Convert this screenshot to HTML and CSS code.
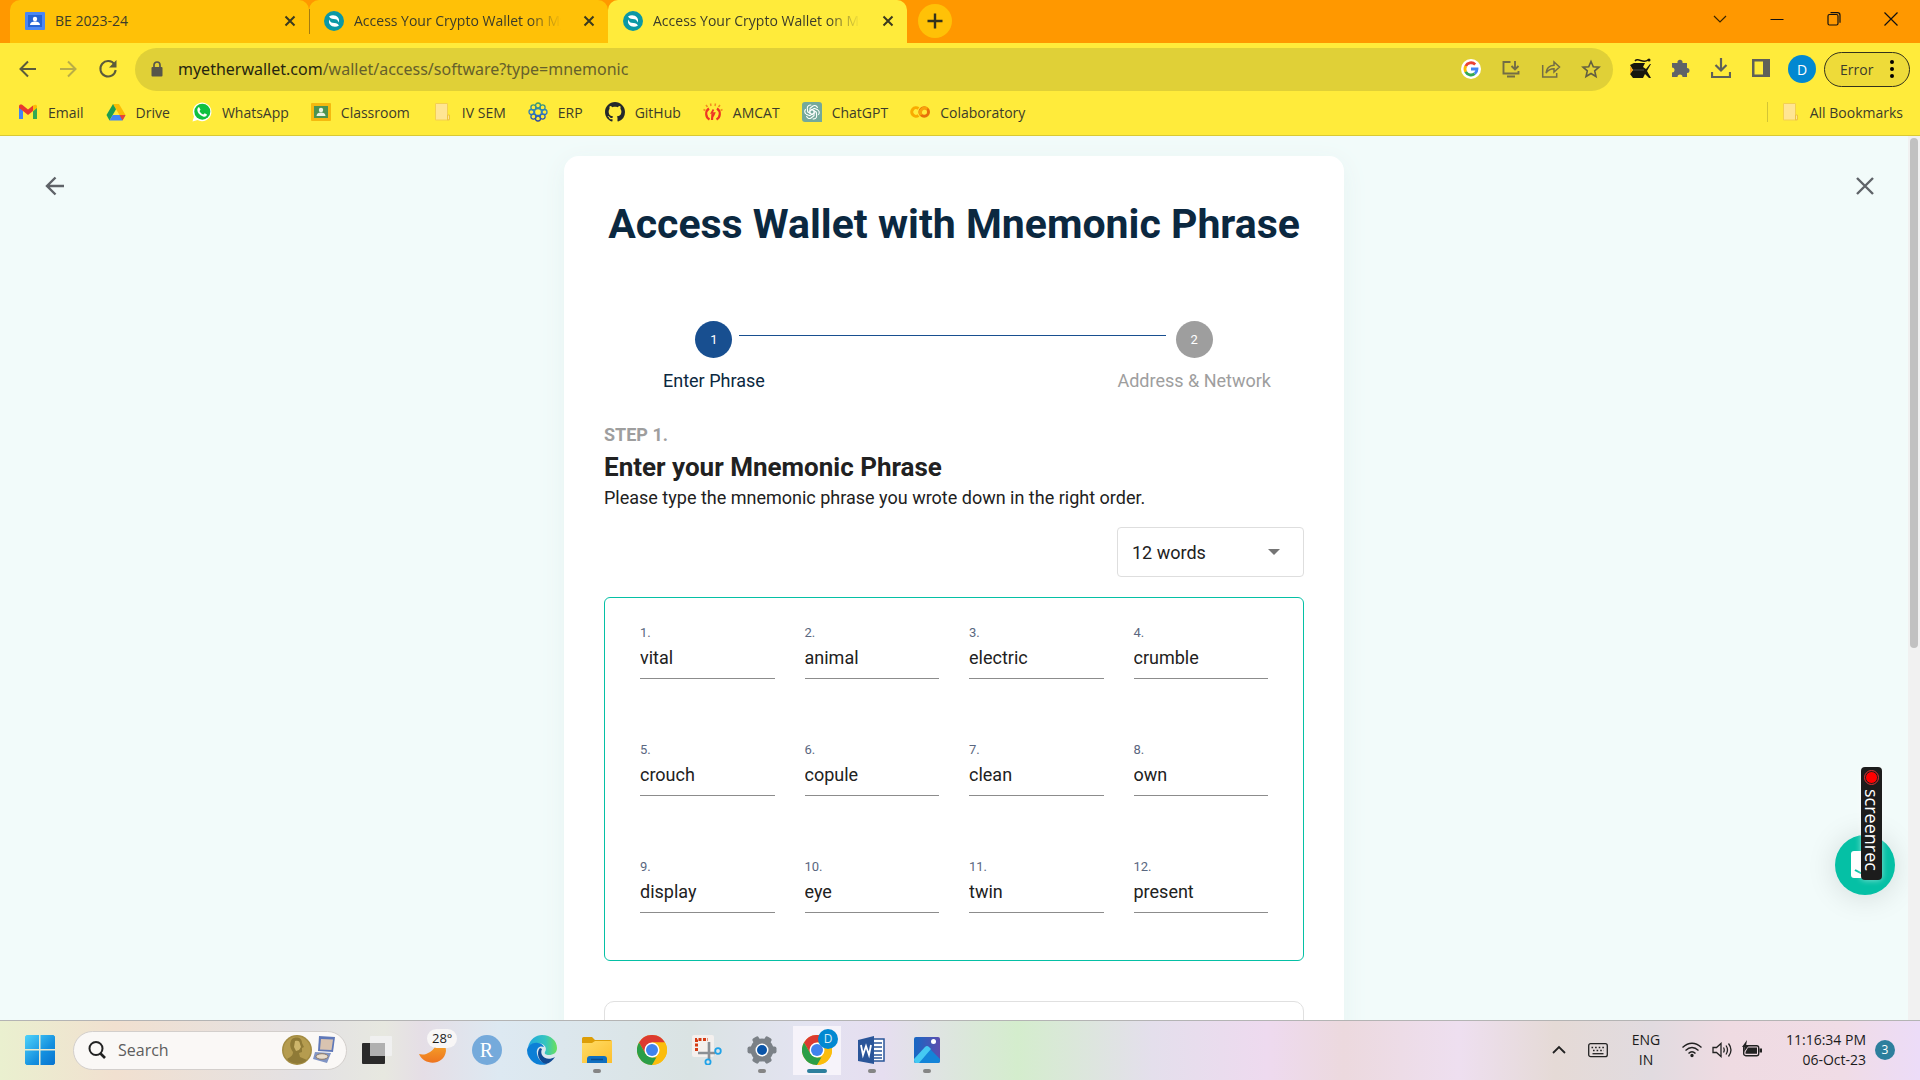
FILE: index.html
```html
<!DOCTYPE html>
<html lang="en">
<head>
<meta charset="utf-8">
<title>Access Your Crypto Wallet on MyEtherWallet</title>
<link rel="stylesheet" href="styles.css">
</head>
<body>
<svg class="defs" aria-hidden="true">
  <defs>
    <linearGradient id="win" x1="0" y1="0" x2="1" y2="1"><stop offset="0" stop-color="#4fd3fa"/><stop offset=".6" stop-color="#1490df"/><stop offset="1" stop-color="#0873cf"/></linearGradient>
    <linearGradient id="moon" x1="0" y1="0" x2="0" y2="1"><stop offset="0" stop-color="#f7b32b"/><stop offset="1" stop-color="#ee7420"/></linearGradient>
    <linearGradient id="edgeA" x1="0" y1="0" x2="1" y2="0"><stop offset="0" stop-color="#1fa7e0"/><stop offset=".6" stop-color="#35c5c0"/><stop offset="1" stop-color="#6be05a"/></linearGradient>
    <linearGradient id="folder" x1="0" y1="0" x2="1" y2="1"><stop offset="0" stop-color="#ffdc66"/><stop offset="1" stop-color="#fdbf2d"/></linearGradient>
    <linearGradient id="photo" x1="0" y1="0" x2="1" y2="0"><stop offset="0" stop-color="#1668c4"/><stop offset="1" stop-color="#5d4dae"/></linearGradient>
    <linearGradient id="erp" gradientUnits="userSpaceOnUse" x1="0" y1="0" x2="0" y2="20"><stop offset="0" stop-color="#3d9c62"/><stop offset=".5" stop-color="#2f7fc4"/><stop offset="1" stop-color="#2b3fa0"/></linearGradient>
    <symbol id="mew" viewBox="0 0 20 20"><circle cx="10" cy="10" r="10" fill="#0b98a5"/><path d="M5 5.500C8 3.500 12 4 14 6.500c1.300 1.700 1.300 3.500.5 5-.3-2-1.500-3-3-3.200C9 8 6.500 8 5 5.500zM15 14.500c-3 2-7 1.500-9-1-1.300-1.700-1.300-3.500-.5-5 .3 2 1.500 3 3 3.200 2.500.3 5 .3 6.500 2.800z" fill="#fff"/></symbol>
    <symbol id="x" viewBox="0 0 12 12"><path d="M1.500 1.500l9 9M10.500 1.500l-9 9" stroke="#3b3a1f" stroke-width="2"/></symbol>
    <symbol id="note" viewBox="0 0 20 20"><path d="M3.500 1.500h12v12h2v4.500h-14z" fill="#ffe594" stroke="#f3d050"/><path d="M15.500 18v-5h2v4.500z" fill="#ffe594" stroke="#efc43c"/></symbol>
    <symbol id="chrome" viewBox="0 0 30 30"><circle cx="15" cy="15" r="15" fill="#fbbd0d"/><path d="M2 7.500A15 15 0 0 1 28 7.500H15L8.500 18.700z" fill="#dc3a30"/><path d="M2 7.500l6.500 11.200L15 22.500h6.500L15 30A15 15 0 0 1 2 7.500z" fill="#2b9e48"/><path d="M21.500 18.700L15 30A15 15 0 0 0 28 7.500H15z" fill="#fbbd0d"/><circle cx="15" cy="15" r="7.500" fill="#fff"/><circle cx="15" cy="15" r="6" fill="#3f83ed"/></symbol>
  </defs>
</svg>

<div class="browser">
  <header class="chrome">
    <div class="tabstrip">
      <div class="tab">
        <svg class="i20" viewBox="0 0 20 20"><rect y="1" width="20" height="18" rx="1" fill="#4a87f3"/><rect x="3" y="4" width="14" height="12" fill="#2664d4"/><circle cx="10" cy="8" r="2.200" fill="#fff"/><path d="M5 14c0-2.500 2.500-3.500 5-3.500s5 1 5 3.500z" fill="#fff"/></svg>
        <span class="tab-title">BE 2023-24</span>
        <button class="tab-close" aria-label="Close tab"><svg class="i12"><use href="#x"/></svg></button>
      </div>
      <div class="tab tab-divided">
        <svg class="i20"><use href="#mew"/></svg>
        <span class="tab-title tab-fade">Access Your Crypto Wallet on My</span>
        <button class="tab-close" aria-label="Close tab"><svg class="i12"><use href="#x"/></svg></button>
      </div>
      <div class="tab tab-active">
        <svg class="i20"><use href="#mew"/></svg>
        <span class="tab-title tab-fade">Access Your Crypto Wallet on My</span>
        <button class="tab-close" aria-label="Close tab"><svg class="i12"><use href="#x"/></svg></button>
      </div>
      <button class="new-tab" aria-label="New tab"><svg class="i20" viewBox="0 0 20 20"><path d="M10 2.500v15M2.500 10h15" stroke="#33321c" stroke-width="2.400"/></svg></button>
      <div class="window-controls">
        <button aria-label="Search tabs"><svg class="i14" viewBox="0 0 14 14"><path d="M1 4l6 6 6-6" fill="none" stroke="#3a2500" stroke-width="1.200"/></svg></button>
        <button aria-label="Minimize"><svg class="i14" viewBox="0 0 14 14"><path d="M.5 7.500h13" stroke="#111"/></svg></button>
        <button aria-label="Restore"><svg class="i14" viewBox="0 0 14 14"><rect x="1" y="2.500" width="10" height="10.500" rx="1.500" fill="none" stroke="#111" stroke-width="1.200"/><path d="M3.500.7h7q2.500 0 2.500 2.500v7.500" fill="none" stroke="#111" stroke-width="1.200"/></svg></button>
        <button aria-label="Close"><svg class="i14" viewBox="0 0 14 14"><path d="M.5.5l13 13M13.500.5l-13 13" stroke="#111" stroke-width="1.200"/></svg></button>
      </div>
    </div>

    <div class="toolbar">
      <nav class="nav-buttons">
        <button aria-label="Back"><svg class="i20" viewBox="0 0 20 20"><path d="M18 10H3M10 2.500L2.500 10l7.500 7.500" fill="none" stroke="#5b5b3c" stroke-width="2"/></svg></button>
        <button aria-label="Forward"><svg class="i20" viewBox="0 0 20 20"><path d="M2 10h15M10 2.500l7.500 7.500-7.500 7.500" fill="none" stroke="#b9ad46" stroke-width="2"/></svg></button>
        <button aria-label="Reload"><svg class="i20" viewBox="0 0 20 20"><path d="M16.500 5.500A7.700 7.700 0 1 0 17.700 11" fill="none" stroke="#5b5b3c" stroke-width="2"/><path d="M18.500 1v7.500H11z" fill="#5b5b3c"/></svg></button>
      </nav>
      <div class="omnibox">
        <svg class="lock" viewBox="0 0 12 16"><rect x=".5" y="6" width="11" height="9.500" rx="1" fill="#56554a"/><path d="M3 6V4a3 3 0 0 1 6 0v2" fill="none" stroke="#56554a" stroke-width="1.700"/></svg>
        <div class="url" role="textbox" aria-label="Address"><span class="host">myetherwallet.com</span>/wallet/access/software?type=mnemonic</div>
        <svg class="i20" viewBox="0 0 20 20"><circle cx="10" cy="10" r="10" fill="#fff"/><g fill="none" stroke-width="2.800"><path d="M14.200 5.400A6 6 0 0 0 4.700 7.200" stroke="#ea4335"/><path d="M4.800 7A6 6 0 0 0 4.800 13" stroke="#fbbc05"/><path d="M4.700 12.800A6 6 0 0 0 13.700 14.700" stroke="#34a853"/><path d="M10 10h6a6 6 0 0 1-2.200 4.700" stroke="#4285f4"/></g></svg>
        <svg class="i20" viewBox="0 0 20 20"><path d="M9.500 3H2.500v11.500h15V12M6 17.500h8M14 2v8M10.500 7l3.500 3.500L17.500 7" fill="none" stroke="#736d45" stroke-width="1.900"/></svg>
        <svg class="i20" viewBox="0 0 20 20"><path d="M1.700 6v12h14v-4M5 14c.5-5 3.500-7.500 8-7.800V3l5.500 5-5.500 5V9.800C9.500 9.800 7 11 5 14z" fill="none" stroke="#736d45" stroke-width="1.500"/></svg>
        <svg class="i20" viewBox="0 0 20 20"><path d="M10 2.500l2.300 5.200 5.700.5-4.300 3.700 1.300 5.600-5-3-5 3 1.300-5.600L2 8.200l5.700-.5z" fill="none" stroke="#625e41" stroke-width="1.600"/></svg>
      </div>
      <div class="extensions">
        <svg class="i22" viewBox="0 0 22 22"><path d="M5 5h11l-2 4 3 2 4-5h1l-4 7 4 7h-2l-4-4-2 4H4l-3-4 3-4-3-5z" fill="#17160e"/><path d="M4 12h11" stroke="#4a4a45"/><path d="M6 3c3-4 8 3 13-1l2 0" fill="none" stroke="#17160e" stroke-width="1.500"/><circle cx="20" cy="2" r="1.500" fill="#17160e"/><path d="M1 8l3 4-3 4z" fill="#f5a21c"/></svg>
        <svg class="i20" viewBox="0 0 20 20"><path d="M1 5h5.500a2.600 2.600 0 1 1 5 0H16v5a2.500 2.500 0 1 1 0 5v4h-4.500a2.500 2.500 0 1 0-5 0H1v-4.500a2.500 2.500 0 1 0 0-5z" fill="#5f6368"/></svg>
        <svg class="i20" viewBox="0 0 20 20"><path d="M10 0v12M4.500 7L10 12.500 15.500 7M1 14v5h18v-5" fill="none" stroke="#5f6059" stroke-width="2.200"/></svg>
        <svg class="i20" viewBox="0 0 20 20"><path d="M1 1h18v18H1zM3.500 3.500v13H12v-13z" fill="#5f6059" fill-rule="evenodd"/></svg>
      </div>
      <button class="avatar">D</button>
      <button class="error-pill">Error<svg class="dots" viewBox="0 0 4 18"><circle cx="2" cy="2" r="2"/><circle cx="2" cy="9" r="2"/><circle cx="2" cy="16" r="2"/></svg></button>
    </div>

    <nav class="bookmarks">
      <a href="#"><svg class="i20" viewBox="0 0 20 20"><path d="M1 4v13h4V9z" fill="#4285f4"/><path d="M19 4v13h-4V9z" fill="#34a853"/><path d="M1 4.500C1 2.500 3 2 4.500 3L10 7.500 15 3.500V9l-5 4-5-4-4-3z" fill="#e8392e"/><path d="M15 3.500c2-1.500 4-1 4 1V6l-4 3.200z" fill="#fbbc05"/></svg>Email</a>
      <a href="#"><svg class="i20" viewBox="0 0 20 20"><path d="M7 2h6l6.500 11h-6z" fill="#fbbc04"/><path d="M7 2l3 5.300L3.500 18.500l-3-5.500z" fill="#1c9c52"/><path d="M6.700 13h12.800l-3 5.500h-13z" fill="#4285f4"/><path d="M13.500 13h6l-3 5.500z" fill="#ea4335"/></svg>Drive</a>
      <a href="#"><svg class="i20" viewBox="0 0 20 20"><path d="M.5 19.500l1.500-5A9.300 9.300 0 1 1 5.500 18z" fill="#fff"/><circle cx="10.300" cy="9.700" r="8" fill="#10c040"/><path d="M7 5l1.500 2.700-1 1.300c1 1.800 2 2.800 3.800 3.600l1.400-1.300 2.300 1.300c-.5 2-2 2.600-4 2C7.500 13.300 5.500 10.500 5.300 8c0-1.500.7-2.500 1.700-3z" fill="#fff"/></svg>WhatsApp</a>
      <a href="#"><svg class="i20" viewBox="0 0 20 20"><rect y="1" width="20" height="18" rx="1" fill="#f5b90f"/><rect x="3" y="4" width="14" height="12" fill="#4b9350"/><circle cx="10" cy="8" r="2.200" fill="#e9f3e3"/><path d="M5.500 14c0-2.500 2-3.500 4.500-3.500s4.500 1 4.500 3.500z" fill="#e9f3e3"/></svg>Classroom</a>
      <a href="#"><svg class="i20"><use href="#note"/></svg>IV SEM</a>
      <a href="#"><svg class="i20" viewBox="0 0 20 20" fill="none" stroke="url(#erp)" stroke-width="1.300"><circle cx="10" cy="10" r="3.500"/><circle cx="10" cy="3.500" r="2.500"/><circle cx="14.600" cy="5.400" r="2.500"/><circle cx="16.500" cy="10" r="2.500"/><circle cx="14.600" cy="14.600" r="2.500"/><circle cx="10" cy="16.500" r="2.500"/><circle cx="5.400" cy="14.600" r="2.500"/><circle cx="3.500" cy="10" r="2.500"/><circle cx="5.400" cy="5.400" r="2.500"/></svg>ERP</a>
      <a href="#"><svg class="i20" viewBox="0 0 16 16"><path fill="#24282c" d="M8 0C3.580 0 0 3.580 0 8c0 3.540 2.290 6.530 5.470 7.590.4.070.55-.17.55-.38 0-.19-.01-.82-.01-1.490-2.010.37-2.530-.49-2.690-.94-.09-.23-.48-.94-.82-1.130-.28-.15-.68-.52-.01-.53.63-.01 1.080.58 1.230.82.72 1.210 1.870.87 2.330.66.07-.52.28-.87.51-1.070-1.780-.2-3.640-.89-3.640-3.950 0-.87.31-1.590.82-2.150-.08-.2-.36-1.020.08-2.120 0 0 .67-.21 2.200.82.64-.18 1.320-.27 2-.27s1.360.09 2 .27c1.530-1.040 2.200-.82 2.200-.82.44 1.100.16 1.920.08 2.120.51.56.82 1.270.82 2.150 0 3.070-1.870 3.750-3.650 3.950.29.25.54.73.54 1.480 0 1.070-.01 1.930-.01 2.200 0 .21.15.46.55.38A8.010 8.010 0 0 0 16 8c0-4.420-3.580-8-8-8z"/></svg>GitHub</a>
      <a href="#"><svg class="i20" viewBox="0 0 20 20" fill="none" stroke="#ee3524"><path d="M6.500 17.500A6.500 6.500 0 0 1 6 6.500M14 6.500a6.500 6.500 0 0 1-.5 11M9 18l.5-6.500" stroke-width="2.200"/><path d="M10.500 7.500L8.500 11h3l-1.500 3.500" stroke-width="1.700"/><path d="M4.500 5L3 3M8 4l-.5-2.500M12 4l.5-2.500M15.500 5L17 3M2.500 8.500L.5 7.500M17.500 8.500l2-1" stroke-width="1.500" stroke="#f38a1e"/></svg>AMCAT</a>
      <a href="#"><svg class="i20" viewBox="0 0 20 20"><path d="M3 0h14q3 0 3 3v17H3q-3 0-3-3V3q0-3 3-3z" fill="#74a99b"/><g fill="none" stroke="#fff" stroke-width="1.100"><path d="M8 12.300V6.200l3-2.200a3 3 0 0 1 4.500 2"/><path d="M8 12.300V6.200l3-2.200a3 3 0 0 1 4.500 2" transform="rotate(60 10 10)"/><path d="M8 12.300V6.200l3-2.200a3 3 0 0 1 4.500 2" transform="rotate(120 10 10)"/><path d="M8 12.300V6.200l3-2.200a3 3 0 0 1 4.500 2" transform="rotate(180 10 10)"/><path d="M8 12.300V6.200l3-2.200a3 3 0 0 1 4.500 2" transform="rotate(240 10 10)"/><path d="M8 12.300V6.200l3-2.200a3 3 0 0 1 4.500 2" transform="rotate(300 10 10)"/></g></svg>ChatGPT</a>
      <a href="#"><svg class="i20" viewBox="0 0 20 20" fill="none" stroke-width="3"><path d="M8.500 13.500A4.300 4.300 0 1 1 8.500 6.500" stroke="#f9ab00"/><circle cx="14.200" cy="10" r="4.300" stroke="#e8710a"/><path d="M11.200 13A4.300 4.300 0 0 1 17.200 7" stroke="#f9a20a"/></svg>Colaboratory</a>
      <a href="#" class="all-bookmarks"><svg class="i20"><use href="#note"/></svg>All Bookmarks</a>
    </nav>
  </header>

  <div class="viewport">
    <main class="page">
      <button class="page-nav page-back" aria-label="Back"><svg class="i20" viewBox="0 0 20 20"><path d="M19 10H2M10.500 1.500L2 10l8.500 8.500" fill="none" stroke="#5f6368" stroke-width="2.400"/></svg></button>
      <section class="card">
        <h1>Access Wallet with Mnemonic Phrase</h1>
        <ol class="stepper">
          <li class="step step-on"><span class="dot">1</span><span class="step-name">Enter Phrase</span></li>
          <li class="rail" aria-hidden="true"></li>
          <li class="step"><span class="dot">2</span><span class="step-name">Address &amp; Network</span></li>
        </ol>
        <p class="eyebrow">STEP 1.</p>
        <h2>Enter your Mnemonic Phrase</h2>
        <p class="lead">Please type the mnemonic phrase you wrote down in the right order.</p>
        <div class="length">
          <select aria-label="Phrase length"><option>12 words</option><option>24 words</option></select>
          <svg class="caret" viewBox="0 0 12 6"><path d="M0 0h12L6 6z" fill="#757575"/></svg>
        </div>
        <form class="words">
          <div class="word"><label for="w1">1.</label><input id="w1" value="vital"></div>
          <div class="word"><label for="w2">2.</label><input id="w2" value="animal"></div>
          <div class="word"><label for="w3">3.</label><input id="w3" value="electric"></div>
          <div class="word"><label for="w4">4.</label><input id="w4" value="crumble"></div>
          <div class="word"><label for="w5">5.</label><input id="w5" value="crouch"></div>
          <div class="word"><label for="w6">6.</label><input id="w6" value="copule"></div>
          <div class="word"><label for="w7">7.</label><input id="w7" value="clean"></div>
          <div class="word"><label for="w8">8.</label><input id="w8" value="own"></div>
          <div class="word"><label for="w9">9.</label><input id="w9" value="display"></div>
          <div class="word"><label for="w10">10.</label><input id="w10" value="eye"></div>
          <div class="word"><label for="w11">11.</label><input id="w11" value="twin"></div>
          <div class="word"><label for="w12">12.</label><input id="w12" value="present"></div>
        </form>
        <div class="extra"></div>
      </section>
      <button class="page-nav page-close" aria-label="Close"><svg class="i18" viewBox="0 0 18 18"><path d="M1 1l16 16M17 1L1 17" stroke="#5f6368" stroke-width="2.400"/></svg></button>
      <button class="chat" aria-label="Chat"><svg class="chat-icon" viewBox="0 0 28 28"><rect width="28" height="27" rx="3" fill="#fff"/><path d="M4 19q10 7 20 0" fill="none" stroke="#05c0a5" stroke-width="2"/></svg></button>
      <div class="recorder"><span class="rec-dot"></span>screenrec</div>
    </main>
    <div class="scrollbar"><div class="thumb"></div></div>
  </div>
</div>

<footer class="taskbar">
  <button class="start" aria-label="Start"><svg class="i30" viewBox="0 0 30 30"><path d="M1.500 0H14v14H0V1.500zM15.500 0h13L30 1.500V14H15.500zM0 15.500h14V30H1.500L0 28.500zM15.500 15.500H30v13L28.500 30h-13z" fill="url(#win)"/></svg></button>
  <label class="search">
    <svg class="i18" viewBox="0 0 18 18"><circle cx="8" cy="7.500" r="6.500" fill="none" stroke="#222" stroke-width="2"/><path d="M12.500 12.500l4.500 4.500" stroke="#222" stroke-width="2.600"/></svg>
    <input placeholder="Search" aria-label="Search">
    <svg class="medal" viewBox="0 0 54 30"><circle cx="15" cy="15" r="15" fill="#a38c42"/><circle cx="15" cy="15" r="13.500" fill="#b59c4f"/><path d="M10 4c5-3 10-1 10 4l2 4-2 1v4l-3 1 1 4 7 3c-5 5-16 5-20-1 3-2 6-3 6-7-3-4-4-9-1-13z" fill="#8f7a36"/><path d="M13 6c3-1 5 0 5 3l1 3-2 3-3 1-2-4z" fill="#cdb56b"/><path d="M37 1l16 1-2 15-15-1z" fill="#5f78b8"/><path d="M39 4l12 .5-1.500 10.500-11.500-.5z" fill="#d9c3b0"/><path d="M33 17l16 1-4 10-14-4z" fill="#8094c4"/><ellipse cx="40" cy="21.500" rx="6" ry="2.800" fill="#e8dccb" stroke="#8c7a68"/></svg>
  </label>
  <nav class="apps">
    <button aria-label="Task view"><svg class="i30" viewBox="0 0 30 30"><rect x="0" y="8" width="23" height="21" rx="1" fill="#2a2a2a"/><rect x="8" y="1" width="22" height="20" rx="1" fill="#f0f0f0"/><path d="M8 8h15v13H8z" fill="#b0b0b0"/></svg></button>
    <button aria-label="Weather"><svg class="i30" viewBox="0 0 30 30"><path d="M19 2a14 14 0 0 1-17 17c5 12 25 12 27-3C29 9 25 4 19 2z" fill="url(#moon)"/></svg><span class="temp">28°</span></button>
    <button aria-label="RStudio"><span class="r-app">R</span></button>
    <button aria-label="Edge"><svg class="i30" viewBox="0 0 30 30"><path d="M1 12C3 4 9 0 15 0c9 0 15 6 15 13 0 5-4 7-8 7-3 0-5-1-4-3 3-5-2-9-7-9-4 0-8 2-10 4z" fill="url(#edgeA)"/><path d="M0 15C1 10 6 7 11 8c3 0 5 2 6 4-5-2-8 2-7 7 1 6 6 9 10 10A15 15 0 0 1 0 15z" fill="#0c7fd6"/><path d="M13 13c-4 4-2 14 6 16 4-1 7-4 9-7-5 3-11 2-13-2-1-2-1-4 0-6z" fill="#114a93"/></svg></button>
    <button class="running" aria-label="File Explorer"><svg class="i30" viewBox="0 0 30 30"><path d="M0 3.500Q0 2 1.500 2H10l3 3h15q2 0 2 2v5H0z" fill="#dd9e07"/><path d="M0 8h10l3-2h17v22H0z" fill="url(#folder)"/><path d="M5 28v-4q0-3 3-3h14q3 0 3 3v4z" fill="#0f6fc0"/><path d="M9 24.500h12" stroke="#0b4c8d" stroke-width="1.500"/></svg></button>
    <button aria-label="Chrome"><svg class="i30"><use href="#chrome"/></svg></button>
    <button aria-label="Snipping Tool"><svg class="i30" viewBox="0 0 30 30"><rect width="22" height="22" rx="2" fill="#f4f0ee"/><path d="M4.500 16V4.500H16" fill="none" stroke="#d63b12" stroke-width="3" stroke-dasharray="3 1.500"/><path d="M17 7v17M6 18h17" stroke="#8b8f94" stroke-width="2.600"/><circle cx="26" cy="16" r="2.800" fill="none" stroke="#1fa2e8" stroke-width="1.800"/><circle cx="16" cy="27" r="2.600" fill="none" stroke="#1fa2e8" stroke-width="1.800"/></svg></button>
    <button class="running" aria-label="Settings"><svg class="i30" viewBox="0 0 30 30"><g fill="#7b8187"><circle cx="15" cy="15" r="11.500"/><rect id="tooth" x="11.500" y="0.500" width="7" height="29" rx="2" transform="rotate(30 15 15)"/><rect x="11.500" y="0.500" width="7" height="29" rx="2" transform="rotate(90 15 15)"/><rect x="11.500" y="0.500" width="7" height="29" rx="2" transform="rotate(150 15 15)"/></g><circle cx="15" cy="15" r="6.500" fill="#fff"/><circle cx="15" cy="15" r="5" fill="#0b55a8"/></svg></button>
    <button class="running current" aria-label="Chrome, profile D"><svg class="i30"><use href="#chrome"/></svg><span class="profile">D</span></button>
    <button class="running" aria-label="Word"><svg class="i30" viewBox="0 0 30 30"><path d="M15 4h12v22H15z" fill="#fff" stroke="#2a5599" stroke-width="1.500"/><path d="M17 8h8M17 12h8M17 16h8M17 20h8M17 23h8" stroke="#2a5599" stroke-width="1.300"/><path d="M1 5l16-4v28L1 26z" fill="#2a5599"/><path d="M4 10l2 10 3-9 3 9 2-10" fill="none" stroke="#fff" stroke-width="1.800"/></svg></button>
    <button class="running" aria-label="Photos"><svg class="i30" viewBox="0 0 30 30"><rect x="2" y="2" width="26" height="26" rx="2" fill="url(#photo)"/><path d="M2 25l11-12q2-2 4 0l11 11v2q0 2-2 2H4q-2 0-2-3z" fill="#1484d8"/><path d="M2 24l11-12q2-2 4 0l2 2L7 28H4q-2 0-2-4z" fill="#45c9f2"/><circle cx="21.500" cy="6.500" r="2.500" fill="#fff"/></svg></button>
  </nav>
  <div class="tray">
    <svg class="i14" viewBox="0 0 14 14"><path d="M1 10l6-6 6 6" fill="none" stroke="#222" stroke-width="1.800"/></svg>
    <svg class="i20 keyboard" viewBox="0 0 20 20"><rect x=".7" y="3.700" width="18.600" height="13" rx="2" fill="none" stroke="#222" stroke-width="1.300"/><path d="M3.500 7.500h13M5 10.500h11" stroke="#222" stroke-width="1.600" stroke-dasharray="1.600 2"/><path d="M4.500 13.700h11" stroke="#222" stroke-width="1.300"/></svg>
    <span class="lang">ENG<br>IN</span>
    <div class="status">
      <svg class="i20" viewBox="0 0 20 20" fill="none" stroke="#222" stroke-width="1.400"><path d="M.5 7.500q9.500-8.500 19 0M3.500 10.500q6.500-6 13 0M6.500 13.500q3.500-3.500 7 0"/><circle cx="10" cy="15.500" r="1" fill="#222"/></svg>
      <svg class="i20" viewBox="0 0 20 20" fill="none" stroke="#222" stroke-width="1.300"><path d="M1 7.500v5h3.500L9 16.500v-13L4.500 7.500zM11.500 7.500q1.500 2.500 0 5M14 5.500q3 4.500 0 9M16.500 3.500q5 6.500 0 13"/></svg>
      <svg class="i20" viewBox="0 0 20 20"><rect x="1.700" y="5.700" width="15" height="10" rx="2" fill="none" stroke="#222" stroke-width="1.400"/><path d="M3.500 13.800V12L6 7.500h9v6.300zM17.500 8.500H20v4h-2.500z" fill="#222"/><path d="M5 0L0 7h2.500L2 12l4.500-6H4z" fill="#222"/></svg>
    </div>
    <time class="clock">11:16:34 PM<br>06-Oct-23</time>
    <span class="count">3</span>
  </div>
</footer>
</body>
</html>
```
FILE: styles.css
```css
* { box-sizing: border-box; }
body {
  margin: 0;
  height: 100vh;
  display: flex;
  flex-direction: column;
  overflow: hidden;
  font-family: "Open Sans", "Noto Sans", sans-serif;
  color: #3c3c2a;
}
button { border: 0; padding: 0; margin: 0; background: none; font: inherit; color: inherit; display: grid; place-items: center; }
svg { display: block; flex: none; }
.defs { position: absolute; width: 0; height: 0; }
.i12 { width: 12px; height: 12px; }
.i14 { width: 14px; height: 14px; }
.i18 { width: 18px; height: 18px; }
.i20 { width: 20px; height: 20px; }
.i22 { width: 22px; height: 22px; }
.i30 { width: 30px; height: 30px; }

/* Browser frame */
.browser { flex: 1; min-height: 0; display: flex; flex-direction: column; }
.chrome { background: #ffeb3b; border-bottom: 1px solid #d9c935; }
.tabstrip { display: flex; height: 43px; background: #ff9800; padding-left: 10px; }
.tab {
  width: 299px;
  padding: 0 9px 2px 15px;
  display: flex;
  align-items: center;
  gap: 10px;
  background: #ffc107;
  border-radius: 10px 10px 0 0;
  font-size: 14px;
}
.tab-divided { background: linear-gradient(#a57c10, #a57c10) 0 9px / 1px 25px no-repeat #ffc107; }
.tab-active { background: #ffeb3b; }
.tab-title { flex: 1; white-space: nowrap; }
.tab-fade { -webkit-mask: linear-gradient(to left, transparent 8px, #000 40px); mask: linear-gradient(to left, transparent 8px, #000 40px); }
.tab-close { width: 20px; height: 20px; }
.new-tab { width: 34px; height: 34px; margin: 4px 0 0 11px; border-radius: 50%; background: #ffc107; }
.window-controls { display: flex; margin-left: auto; padding-right: 1px; }
.window-controls button { width: 57px; height: 37px; }

.toolbar { display: flex; align-items: center; height: 52px; padding: 0 10px 0 8px; }
.nav-buttons { display: flex; }
.nav-buttons button { width: 40px; height: 40px; }
.omnibox {
  flex: 1;
  height: 43px;
  margin-left: 7px;
  padding: 0 12px 0 16px;
  display: flex;
  align-items: center;
  gap: 20px;
  background: #e0d037;
  border-radius: 22px;
}
.lock { width: 12px; height: 16px; margin-right: -5px; }
.url { flex: 1; font-family: "Noto Sans", sans-serif; font-size: 16px; color: #66602b; }
.host { color: #26250f; }
.extensions { display: flex; gap: 20px; margin: 0 26px 0 16px; }
.avatar { width: 28px; height: 28px; border-radius: 50%; background: #0288d1; color: #fff; font-size: 14px; margin-right: 8px; margin-left: -9px; }
.error-pill {
  width: 86px;
  height: 35px;
  padding: 0 15px;
  display: flex;
  align-items: center;
  justify-content: space-between;
  border: 1px solid #33321c;
  border-radius: 18px;
  background: #eedb39;
  font-size: 14px;
}
.dots { width: 4px; height: 18px; }

.bookmarks { display: flex; align-items: center; gap: 22px; height: 40px; padding: 0 17px 6px 18px; }
.bookmarks a { display: flex; align-items: center; gap: 10px; font-size: 14px; color: inherit; text-decoration: none; white-space: nowrap; }
.bookmarks .all-bookmarks { margin-left: auto; padding-left: 12px; border-left: 1px solid #d3c435; }

/* Wallet page */
.viewport { flex: 1; min-height: 0; display: flex; font-family: Roboto, sans-serif; }
.page {
  flex: 1;
  position: relative;
  display: grid;
  grid-template-columns: 1fr minmax(0, 780px) 1fr;
  align-items: start;
  padding-top: 20px;
  overflow: hidden;
  background: #f2fbfa;
  color: #212121;
}
.page-nav { margin-top: 19px; width: 22px; height: 22px; }
.page-back { margin-left: 44px; }
.page-close { margin-right: 32px; justify-self: end; }
.card {
  padding: 40px;
  background: #fff;
  border-radius: 15px;
  box-shadow: 0 6px 24px #e6f3f2;
}
h1 { margin: 0; font-size: 41px; line-height: 56px; text-align: center; color: #0b2840; white-space: nowrap; }
.stepper { display: flex; list-style: none; margin: 69px 0 0; padding: 0 33px 0 59px; }
.step { display: flex; flex-direction: column; align-items: center; gap: 12px; white-space: nowrap; color: #9e9e9e; }
.step-on { color: #0b2840; }
.dot { display: grid; place-items: center; width: 37px; height: 37px; border-radius: 50%; background: #9e9e9e; color: #fff; font-size: 13px; }
.step-on .dot { background: #184f90; }
.step-name { font-size: 18px; line-height: 22px; }
.rail { flex: 1; height: 1px; margin: 14px -49px 0 -26px; background: #184f90; }
.eyebrow { margin: 32px 0 0; font-size: 18px; line-height: 22px; font-weight: 700; color: #9e9e9e; }
h2 { margin: 4px 0 0; font-size: 26px; line-height: 34px; }
.lead { margin: 1px 0 0; font-size: 18px; line-height: 26px; }
.length { position: relative; width: 187px; margin: 16px 0 20px auto; }
.length select {
  display: block;
  width: 100%;
  height: 50px;
  padding: 0 14px;
  appearance: none;
  border: 1px solid #dedede;
  border-radius: 4px;
  background: #fff;
  color: #212121;
  font: 18px Roboto, sans-serif;
}
.caret { position: absolute; right: 24px; top: 22px; width: 12px; height: 6px; pointer-events: none; }
.words {
  display: grid;
  grid-template-columns: repeat(4, 1fr);
  gap: 63px 30px;
  padding: 27px 35px 47px;
  border: 1px solid #05c0a5;
  border-radius: 6px;
}
.word { display: flex; flex-direction: column; }
.word label { font-size: 13px; line-height: 16px; color: #5a6780; }
.word input {
  width: 100%;
  height: 38px;
  padding: 0 0 5px;
  border: 0;
  border-bottom: 1px solid #8c8c8c;
  background: none;
  color: #212121;
  font: 18px Roboto, sans-serif;
}
.extra { height: 90px; margin-top: 40px; border: 1px solid #e0e0e0; border-radius: 10px; }
.chat { position: absolute; right: 13px; bottom: 125px; width: 60px; height: 60px; border-radius: 50%; background: #05c0a5; box-shadow: 0 2px 30px #0002; }
.chat-icon { width: 28px; height: 28px; }
.recorder {
  position: absolute;
  right: 26px;
  bottom: 140px;
  width: 21px;
  height: 113px;
  padding-top: 4px;
  display: flex;
  align-items: center;
  gap: 5px;
  writing-mode: vertical-rl;
  background: #1c1c1c;
  border-radius: 4px;
  color: #fff;
  font: 18px/21px "Open Sans", sans-serif;
  box-shadow: 0 0 6px #fff8;
}
.rec-dot { width: 13px; height: 13px; border: 1px solid #1c1c1c; outline: 1px solid #d33; border-radius: 50%; background: #f00; }
.scrollbar { width: 12px; padding: 2px; background: #f1f1f1; }
.thumb { height: 58%; border-radius: 4px; background: #c1c1c1; }

/* Taskbar */
.taskbar {
  height: 60px;
  display: flex;
  align-items: center;
  padding: 0 25px 1px;
  border-top: 1px solid #b4b4b4;
  background: linear-gradient(90deg, #eaf0cf 0, #f1e0d0 6%, #e3e1e4 16%, #e7e8e0 20%, #e5dee6 22%, #dde9f2 26%, #dae3e3 36%, #e3e3f1 42%, #e6def0 46%, #d4edcd 53%, #e4dfec 60%, #eedaef 66%, #ecd9de 70%, #eedff0 76%, #e5dad6 81%, #e1dbe0 86%, #efdbe2 90%, #f0dce6 96%, #ecdcf8 100%);
  font-size: 14px;
  color: #1b1b1b;
}
.search {
  width: 274px;
  height: 39px;
  margin-left: 18px;
  padding: 0 10px 0 14px;
  display: flex;
  align-items: center;
  gap: 12px;
  background: #faf8f6;
  border: 1px solid #d3cfcc;
  border-radius: 20px;
}
.search input { flex: 1; min-width: 0; border: 0; background: none; font: 16px "Open Sans", sans-serif; padding: 0; }
.search input::placeholder { color: #5d5d5d; }
.medal { width: 54px; height: 30px; }
.apps { display: flex; margin-left: 2px; }
.apps button { position: relative; width: 55px; height: 58px; }
.running::after { content: ""; position: absolute; left: 24px; bottom: 6px; width: 8px; height: 4px; border-radius: 2px; background: #858585; }
.apps .current { background: linear-gradient(#f6f3fa, #f6f3fa) center / 48px 49px no-repeat; }
.current::after { left: 18px; width: 20px; background: #2d7f9d; }
.temp { position: absolute; left: 23px; top: 8px; padding: 0 5px; border-radius: 10px; background: #f8f6f6; font-size: 13px; line-height: 19px; }
.r-app { display: grid; place-items: center; width: 30px; height: 30px; border-radius: 50%; background: #75aadb; color: #fff; font: 20px "Liberation Serif", serif; }
.profile { position: absolute; left: 29px; top: 8px; width: 20px; height: 20px; border-radius: 50%; background: #0288d1; color: #d7ecf8; font-size: 12px; line-height: 20px; text-align: center; }
.tray { margin-left: auto; display: flex; align-items: center; }
.keyboard { margin: 0 22px; }
.lang { text-align: center; line-height: 20px; width: 32px; }
.status { display: flex; gap: 10px; margin: 0 20px; }
.clock { width: 84px; text-align: right; line-height: 20px; white-space: nowrap; }
.count { width: 20px; height: 20px; margin-left: 9px; border-radius: 50%; background: #2d7f9d; color: #fff; font-size: 12px; line-height: 20px; text-align: center; }
```
